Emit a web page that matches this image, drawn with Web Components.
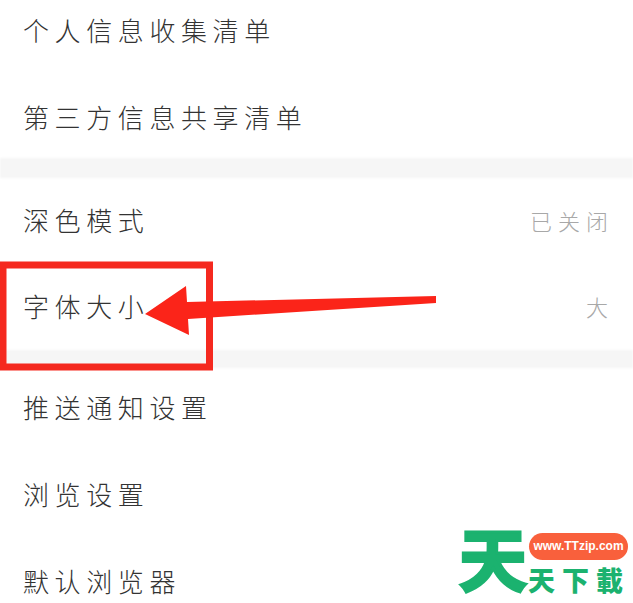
<!DOCTYPE html>
<html lang="zh"><head><meta charset="utf-8"><title>设置</title>
<style>
html,body{margin:0;padding:0;background:#fff}
body{width:633px;height:603px;overflow:hidden;position:relative;font-family:"Noto Sans CJK SC","Noto Sans CJK JP",sans-serif}
</style></head><body>
<settings-page>
  <settings-group>
    <settings-row h="71" pt="0" pb="11">个人信息收集清单</settings-row>
    <settings-row h="87" pt="5" pb="0">第三方信息共享清单</settings-row>
  </settings-group>
  <settings-gap h="20"></settings-gap>
  <settings-group>
    <settings-row h="84" pt="0" pb="0" value="已关闭">深色模式</settings-row>
    <settings-row h="88" pt="0" pb="0" value="大">字体大小</settings-row>
  </settings-group>
  <settings-gap h="18"></settings-gap>
  <settings-group>
    <settings-row h="80" pt="0" pb="2">推送通知设置</settings-row>
    <settings-row h="88" pt="4" pb="0">浏览设置</settings-row>
    <settings-row h="84" pt="6" pb="0">默认浏览器</settings-row>
  </settings-group>
</settings-page>
<red-callout></red-callout>
<site-logo></site-logo>
<script>
const def=(name,html,init)=>customElements.define(name,class extends HTMLElement{
  constructor(){super();this.attachShadow({mode:'open'}).innerHTML=html;}
  connectedCallback(){init&&init(this)}
});
def('settings-page','<style>:host{display:flex;flex-direction:column}</style><slot></slot>');
def('settings-group','<style>:host{display:flex;flex-direction:column}</style><slot></slot>');
def('settings-gap','<style>:host{display:block;background:#f6f6f6;filter:blur(1px)}</style>',e=>{e.style.height=e.getAttribute('h')+'px'});
def('settings-row',`<style>
:host{display:flex;align-items:center;justify-content:space-between;box-sizing:border-box;padding-left:23px;padding-right:25px;
 font-size:26px;font-weight:300;letter-spacing:5.600px;color:#333;line-height:1;white-space:nowrap}
.v{font-size:22px;letter-spacing:6px;color:#a8a8a8;margin-right:-6px;font-weight:300}
</style><span><slot></slot></span><span class="v"></span>`,e=>{
  e.style.height=e.getAttribute('h')+'px';
  e.style.paddingTop=e.getAttribute('pt')+'px';
  e.style.paddingBottom=e.getAttribute('pb')+'px';
  e.shadowRoot.querySelector('.v').textContent=e.getAttribute('value')||'';
});
def('red-callout',`<style>:host{position:absolute;left:0;top:0;width:633px;height:603px;pointer-events:none}svg{display:block}</style>
<svg width="633" height="603" viewBox="0 0 633 603">
<rect x="3" y="265" width="206.500" height="102" fill="none" stroke="#f5291f" stroke-width="7"/>
<polygon points="145,314 186,286 187,302 436,296 436,303 188,319 189,335" fill="#fb2419"/>
</svg>`);
def('site-logo',`<style>
:host{position:absolute;left:458px;top:524px;width:175px;height:79px;display:block;font-family:"Noto Sans CJK SC",sans-serif;color:#1bb26f}
.big{position:absolute;left:1px;top:0;font-family:"Liberation Sans","Noto Sans CJK SC",sans-serif;font-size:68px;font-weight:700;line-height:76px;-webkit-text-stroke:3px #1bb26f}
.pill{position:absolute;left:71px;top:9px;width:99px;height:27px;border-radius:14px;background:#f9603c;color:#fff;font:700 12px/27px "Liberation Sans",sans-serif;text-align:center;white-space:nowrap}
.sub{position:absolute;left:70px;top:38px;font-size:27px;font-weight:900;line-height:36px;letter-spacing:7px;white-space:nowrap}
</style><span class="big">天</span><span class="pill">www.TTzip.com</span><span class="sub">天下載</span>`);
</script></body></html>
